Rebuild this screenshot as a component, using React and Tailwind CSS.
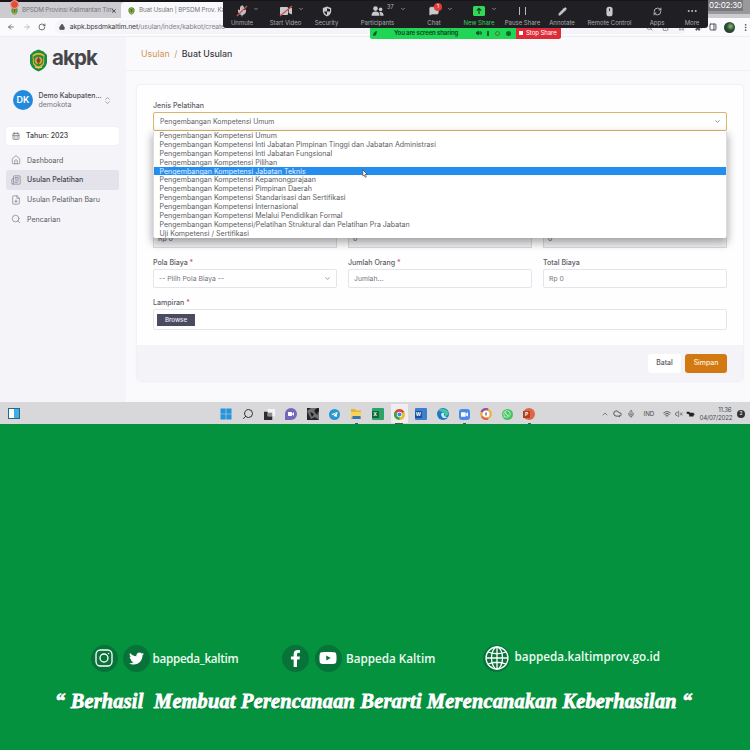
import React from "react";
import {
  ArrowLeft, ArrowRight, RotateCw, Lock, X, ChevronDown, ChevronUp, MicOff, Users, MessageSquare,
  Pencil, RefreshCw, Ellipsis, House, Newspaper, FilePlus, Search, CalendarDays, Cloud, Mic, Wifi, VolumeX,
  ChevronsUpDown, Star, Share, PanelRight, EllipsisVertical, Puzzle, Volume2,
} from "lucide-react";
import { FaTwitter, FaFacebookF, FaWhatsapp, FaTelegramPlane, FaYoutube, FaVideo } from "react-icons/fa";

const options = [
  "Pengembangan Kompetensi Umum",
  "Pengembangan Kompetensi Inti Jabatan Pimpinan Tinggi dan Jabatan Administrasi",
  "Pengembangan Kompetensi Inti Jabatan Fungsional",
  "Pengembangan Kompetensi Pilihan",
  "Pengembangan Kompetensi Jabatan Teknis",
  "Pengembangan Kompetensi Kepamongprajaan",
  "Pengembangan Kompetensi Pimpinan Daerah",
  "Pengembangan Kompetensi Standarisasi dan Sertifikasi",
  "Pengembangan Kompetensi Internasional",
  "Pengembangan Kompetensi Melalui Pendidikan Formal",
  "Pengembangan Kompetensi/Pelatihan Struktural dan Pelatihan Pra Jabatan",
  "Uji Kompetensi / Sertifikasi",
];

function Emblem({ className }) {
  return (
    <svg viewBox="0 0 18 23" className={className}>
      <path d="M9 0.5 L14 2.5 L17.5 6 V14 Q16 20 9 22.5 Q2 20 0.5 14 V6 L4 2.5Z" fill="#1b8a43" />
      <path d="M3 6 Q9 1.5 15 6 L14.5 15 Q12 19 9 20 Q6 19 3.5 15Z" fill="#d5b52b" />
      <path d="M4 7.5 Q9 4 14 7.5 L13.5 14 Q11 17 9 17.5 Q7 17 4.5 14Z" fill="#23864a" />
      <circle cx="9" cy="11.5" r="3.8" fill="#c9a83a" />
      <path d="M9 7.5 L11 11.5 L9 15.5 L7 11.5Z" fill="#8f3d32" />
      <path d="M5.5 18.3 H12.5" stroke="#e8d65e" strokeWidth="1" />
    </svg>
  );
}

function Tabs() {
  return (
    <div className="flex h-[18px] items-stretch border-t-2 border-[#17171a] bg-[#cbcbd0] text-[6.3px] text-[#77777c]">
      <div className="flex w-[121px] items-center pl-[11px] pt-[2px]">
        <div className="relative">
          <Emblem className="h-[8px] w-[7px]" />
          <div className="absolute -left-[1px] -top-[7px] size-[9px] rounded-full border border-[#f4a59b] bg-[#e14c3e]" />
        </div>
        <span className="ml-1 w-[87px] whitespace-nowrap tracking-[-0.15px]">BPSDM Provinsi Kalimantan Tim</span>
        <X className="ml-[2px] size-[6px] text-[#333]" strokeWidth={3} />
      </div>
      <div className="flex w-[120px] items-center rounded-t-[4px] bg-[#f9f9fc] pl-[7px] pt-[2px]">
        <Emblem className="h-[8px] w-[7px]" />
        <span className="ml-1 whitespace-nowrap tracking-[-0.15px]">Buat Usulan | BPSDM Prov. Kal</span>
      </div>
    </div>
  );
}

function AddressBar() {
  return (
    <div className="flex h-[19px] items-center border-b border-[#ececf1] bg-[#fbfbfe] pl-[7px] text-[#55555a]">
      <ArrowLeft className="size-[8px]" strokeWidth={2.5} />
      <ArrowRight className="ml-2 size-[8px] text-[#b5b5ba]" strokeWidth={2.5} />
      <RotateCw className="ml-[7px] size-[8px]" strokeWidth={2.5} />
      <div className="ml-[9px] flex h-[14px] w-[640px] items-center rounded-full bg-[#f5f5f9] pl-[4px]">
        <Lock className="size-[6px] fill-[#55555a]" strokeWidth={3} />
        <span className="ml-[5px] whitespace-nowrap pt-[1px] text-[6.8px] tracking-[-0.12px] text-[#3d3d42]">
          akpk.bpsdmkaltim.net<span className="text-[#85858a]">/usulan/index/kabkot/create</span>
        </span>
        <div className="ml-auto flex items-center gap-[9px] pr-[2px]">
          <Search className="size-[7px]" /><Share className="size-[7px]" /><Star className="size-[7px]" />
        </div>
      </div>
      <Puzzle className="ml-[8px] size-[8px] fill-[#55555a]" />
      <PanelRight className="ml-[6px] size-[8px]" strokeWidth={3} />
      <div className="ml-[7px] size-[11px] rounded-full bg-[radial-gradient(circle_at_60%_40%,#7ba36a_10%,#2f4f37_40%,#1b2f25)]" />
      <EllipsisVertical className="ml-[6px] size-[9px]" strokeWidth={2.5} />
    </div>
  );
}

const Chev = ({ className }) => <ChevronDown className={"absolute top-[5px] size-[6px] text-[#a5a5a8] " + className} strokeWidth={3} />;

function MeetingItem({ className, label, children, green }) {
  return (
    <div className={"relative flex shrink-0 flex-col items-center pt-[4px] " + className}>
      <div className="flex h-[12px] items-center text-[#c9c9cc]">{children}</div>
      <span className={"mt-[1.5px] whitespace-nowrap text-[6px] leading-[8px] " + (green ? "text-[#37cf55]" : "text-[#aaaaae]")}>{label}</span>
    </div>
  );
}

function MeetingBar() {
  return (
    <div className="absolute left-[223px] top-[1px] flex h-[27px] w-[485px] rounded-b-[3px] bg-[#202024]">
      <MeetingItem className="w-[38px]" label="Unmute"><Mic className="size-[12px] fill-[#b9b9bc]" strokeWidth={2} /><svg viewBox="0 0 12 12" className="absolute left-[13px] top-[4px] size-[12px]"><path d="M1 11 L11 1" stroke="#cf4d50" strokeWidth="1.3" /></svg><Chev className="left-[30px]" /></MeetingItem>
      <MeetingItem className="w-[49px]" label="Start Video"><FaVideo className="size-[12px]" /><svg viewBox="0 0 14 12" className="absolute left-[18px] top-[4px] h-[12px] w-[14px]"><path d="M1 11 L13 1" stroke="#cf4d50" strokeWidth="1.3" /></svg><Chev className="left-[37px]" /></MeetingItem>
      <MeetingItem className="w-[33px]" label="Security">
        <svg viewBox="0 0 12 13" className="h-[11px] w-[10px]"><path d="M6 0.5 L11 2.3 V6.5 Q10.5 10.5 6 12.5 Q1.5 10.5 1 6.5 V2.3Z" fill="#c9c9cc" /><path d="M6 2.5 V6.5 H9.6 V3.7Z M6 6.5 H2.5 Q3 9 6 10.8Z" fill="#202024" /></svg>
      </MeetingItem>
      <MeetingItem className="w-[69px]" label="Participants">
        <svg viewBox="0 0 13 10" className="h-[10px] w-[13px]" fill="#c9c9cc"><circle cx="4.5" cy="2.6" r="2.3" /><path d="M0.5 9.8 Q0.5 5.6 4.5 5.6 Q8.5 5.6 8.5 9.8Z" /><circle cx="9.6" cy="3.4" r="1.8" /><path d="M9.3 9.8 Q9.3 7.2 8.2 6.1 Q12.6 5.4 12.6 9.8Z" /></svg>
        <span className="absolute left-[44px] top-[2px] text-[5.5px] leading-[8px]  text-[#b9b9bc]">37</span><Chev className="left-[57px]" />
      </MeetingItem>
      <MeetingItem className="w-[44px]" label="Chat"><MessageSquare className="size-[10px] fill-[#c9c9cc]" /><span className="absolute left-[22px] top-[2px] flex size-[8px] items-center justify-center rounded-full bg-[#e63a39] text-[5px] text-white">1</span><Chev className="left-[35px]" /></MeetingItem>
      <MeetingItem className="w-[46px]" label="New Share" green>
        <svg viewBox="0 0 12 10" className="h-[10px] w-[12px]"><rect width="12" height="10" rx="1.5" fill="#2fda56" /><path d="M6 8 V2.5 M3.8 4.6 L6 2.4 L8.2 4.6" fill="none" stroke="#173b22" strokeWidth="1.2" /></svg>
        <Chev className="left-[35px]" />
      </MeetingItem>
      <MeetingItem className="w-[41px]" label="Pause Share"><div className="h-[8px] w-[7px] border-x-[1.5px] border-[#b9b9bd]" /></MeetingItem>
      <MeetingItem className="w-[38px]" label="Annotate"><Pencil className="size-[9px] fill-[#c9c9cc]" /></MeetingItem>
      <MeetingItem className="w-[57px]" label="Remote Control">
        <svg viewBox="0 0 8 12" className="h-[11px] w-[7px]"><rect x="0.5" y="0.5" width="7" height="11" rx="3" fill="#c9c9cc" /><path d="M4 2.5 V5.5" stroke="#333" strokeWidth="1.2" /></svg>
      </MeetingItem>
      <MeetingItem className="w-[38px]" label="Apps"><RefreshCw className="size-[9px]" strokeWidth={2.3} /></MeetingItem>
      <MeetingItem className="w-[32px]" label="More"><Ellipsis className="size-[12px]" strokeWidth={2} /></MeetingItem>
    </div>
  );
}

function ShareStatus() {
  return (
    <div className="absolute left-[370px] top-[28px] flex h-[10.5px] text-[6.1px] leading-[10px]">
      <div className="flex w-[146px] items-center rounded-bl-[2px] bg-[#1fd655] text-[#123c20]">
        <svg viewBox="0 0 6 6" className="ml-[3px] size-[5px]"><path d="M0 6 Q0 1 5 0 L3.5 5Z" fill="#0c5c25" /></svg>
        <span className="ml-[16px] whitespace-nowrap font-semibold tracking-[-0.15px]">You are screen sharing</span>
        <Volume2 className="ml-auto size-[6px] fill-[#14642c]" strokeWidth={3} />
        <span className="ml-[5px] h-[5px] w-[2px] bg-[#14642c]" />
        <span className="ml-[6px] size-[5px] rounded-full border border-[#55702a]" />
        <span className="ml-[6px] mr-[5px] size-[5px] rounded-full bg-[#0b6a2b]" />
      </div>
      <div className="flex w-[45px] items-center rounded-br-[2px] bg-[#dd2c38] pl-[3px] text-white">
        <span className="size-[4px] bg-white" />
        <span className="ml-[3px] whitespace-nowrap tracking-[-0.1px]">Stop Share</span>
      </div>
    </div>
  );
}

function NavItem({ icon: Icon, label, active }) {
  return (
    <div className={"flex h-[19.7px] items-center rounded-[3px] pl-[4.5px] text-[7.05px] " + (active ? "bg-[#e4e3ec] font-medium text-[#45454d]" : "text-[#5b5b63]")}>
      <Icon className="size-[10px] text-[#85858f]" strokeWidth={1.8} />
      <span className="ml-[6.5px] whitespace-nowrap pt-px">{label}</span>
    </div>
  );
}

function Sidebar() {
  return (
    <aside className="w-[126px] shrink-0 bg-[#f4f4f9] pl-[6px] pr-[7px]">
      <div className="flex h-[46px] items-center pl-[23px]">
        <Emblem className="h-[23px] w-[19px]" />
        <span className="-mt-[4px] ml-[4px] text-[20.5px] font-bold leading-[24px] tracking-[-0.9px] text-[#46464b]">akpk</span>
      </div>
      <div className="mt-[6px] flex h-[22px] items-center pl-[7px]">
        <div className="flex size-[20px] items-center justify-center rounded-full bg-[#2389dc] text-[9px] font-semibold text-white">DK</div>
        <div className="ml-[5.5px] w-[63px] whitespace-nowrap leading-[9.5px]">
          <div className="text-[6.9px] font-medium text-[#4a4a52]">Demo Kabupaten...</div>
          <div className="text-[7px] text-[#77777f]">demokota</div>
        </div>
        <ChevronsUpDown className="ml-[1px] size-[9px] text-[#8b8b93]" />
      </div>
      <div className="mt-[16px] flex h-[18px] items-center rounded-[3px] bg-white pl-[6px] shadow-[0_0_1px_#d5d5dd]">
        <CalendarDays className="size-[8px] text-[#85858f]" strokeWidth={2.8} />
        <span className="ml-[6px] text-[7px] font-medium text-[#3f3f47]">Tahun: 2023</span>
      </div>
      <nav className="mt-[5.5px]">
        <NavItem icon={House} label="Dashboard" />
        <NavItem icon={Newspaper} label="Usulan Pelatihan" active />
        <NavItem icon={FilePlus} label="Usulan Pelatihan Baru" />
        <NavItem icon={Search} label="Pencarian" />
      </nav>
    </aside>
  );
}

function FieldLabel({ children, required }) {
  return (
    <div className="h-[14px] pt-px text-[7.05px] font-medium leading-[14px] text-[#5d5d65]">
      {children}
      {required && <span className="text-[#d0506a]"> *</span>}
    </div>
  );
}

function Field({ label, value, required, select }) {
  return (
    <div className="w-[184px]">
      <FieldLabel required={required}>{label}</FieldLabel>
      <div className="flex h-[19px] items-center justify-between rounded-[2px] border border-[#e4e4ea] bg-white px-[5px] text-[6.85px] text-[#75757d]">
        <span className="whitespace-nowrap pt-px">{value}</span>
        {select && <ChevronDown className="size-[7px]" strokeWidth={2.5} />}
      </div>
    </div>
  );
}

function Main() {
  return (
    <main className="flex-1 bg-[#fafafd]">
      <div className="flex h-[34px] items-center border-b border-[#efeff4] pl-[15px] pt-px text-[8.8px] text-[#3a3a42]">
        <span className="text-[#d0944e]">Usulan</span>
        <span className="mx-[4.5px] text-[#c79a68]">/</span>
        <span className="font-medium">Buat Usulan</span>
      </div>
      <section className="ml-[11px] mt-[14px] h-[296px] w-[606px] rounded-[4px] bg-[#fefefe] shadow-[0_0_2px_#d9d9e2]">
        <div className="h-[260px] px-[16px] pt-[13px]">
          <FieldLabel>Jenis Pelatihan</FieldLabel>
          <div className="relative">
            <div className="flex h-[19px] items-center justify-between rounded-[2px] border border-[#dcb568] bg-white pl-[6px] pr-[5px] text-[6.88px] text-[#606068]">
              <span className="pt-px">Pengembangan Kompetensi Umum</span>
              <ChevronDown className="size-[7px]" strokeWidth={2.5} />
            </div>
            <div className="absolute left-0 top-[19px] z-10 h-[107px] w-[574px] rounded-b-[2px] border-x border-[#dedee2] bg-white shadow-[0_4px_9px_1px_rgba(0,0,0,0.32)]">
              {options.map((o, i) => (
                <div key={o} className={"h-[8.88px] whitespace-nowrap pl-[5.5px] text-[7.07px] leading-[9.6px] " + (i === 4 ? "bg-[#248ef0] text-[#e8f3ff]" : "text-[#5d5d62]")}>{o}</div>
              ))}
            </div>
          </div>
          <div className="mt-[98px] grid grid-cols-3 gap-[11px] text-[6.9px] leading-[18px] text-[#606068]">
            {["Rp 0", "0", "0"].map((v, i) => (
              <div key={i} className="h-[19px] border border-[#d8d8dd] bg-[#f2f2f5] pl-[4px]">{v}</div>
            ))}
          </div>
          <div className="mt-[7px] grid grid-cols-3 gap-[11px]">
            <Field label="Pola Biaya" value="-- Pilih Pola Biaya --" required select />
            <Field label="Jumlah Orang" value="Jumlah..." required />
            <Field label="Total Biaya" value="Rp 0" />
          </div>
          <div className="mt-[7px]"><FieldLabel required>Lampiran</FieldLabel></div>
          <div className="flex h-[21px] items-center rounded-[2px] border border-[#e4e4ea] bg-white pl-[3px]">
            <div className="flex h-[12px] w-[38px] items-center justify-center bg-[#4a4a60] pt-px text-[6.2px] font-medium text-[#eeeef4]">Browse</div>
          </div>
        </div>
        <div className="flex h-[36px] items-center justify-end gap-[4px] rounded-b-[4px] bg-[#f3f3f8] pr-[16px] text-[6.9px] font-medium">
          <div className="flex h-[19px] w-[33px] items-center justify-center rounded-[3px] bg-white pt-px text-[#55555d]">Batal</div>
          <div className="flex h-[19px] w-[42px] items-center justify-center rounded-[3px] bg-[#d37912] pt-px text-[#fff2df]">Simpan</div>
        </div>
      </section>
    </main>
  );
}

function Office({ letter, dark, light, round }) {
  return (
    <div className={"flex size-[12px] items-center " + light + (round ? " rounded-full" : " rounded-[1px]")}>
      <span className={"flex size-[7px] items-center justify-center text-[5px] font-bold leading-none text-white " + dark}>{letter}</span>
    </div>
  );
}

function Slot({ children, open, active }) {
  return (
    <div className={"relative flex h-[21px] w-[21.64px] shrink-0 items-center justify-center pt-px " + (active ? "before:absolute before:inset-x-[2px] before:inset-y-[1px] before:bg-[#eeeef0]" : "")}>
      <div className="relative">{children}</div>
      {open && <span className={"absolute bottom-0 h-[1.5px] bg-[#555] " + (active ? "w-[8px]" : "w-[3px]")} />}
    </div>
  );
}

function Taskbar() {
  return (
    <div className="flex h-[22px] items-center bg-[#d8d8da] pt-px text-[#4c4c50]">
      <div className="flex w-[215.5px] pl-[8px]">
        <div className="flex h-[11px] w-[12px] border border-[#24688f] bg-[#3faee0]"><div className="w-[5px] bg-white" /></div>
      </div>
      <Slot><svg viewBox="0 0 12 12" className="size-[12px]" fill="#2494dc"><path d="M0.5 0.5 H5.7 V5.7 H0.5Z M6.3 0.5 H11.5 V5.7 H6.3Z M0.5 6.3 H5.7 V11.5 H0.5Z M6.3 6.3 H11.5 V11.5 H6.3Z" /></svg></Slot>
      <Slot><Search className="size-[12px] -scale-x-100 text-[#333]" /></Slot>
      <Slot><svg viewBox="0 0 12 12" className="size-[11px]"><rect x="4" y="0" width="8" height="8" fill="#f4f4f4" /><path d="M0 3 H4 V8 H9 V12 H0Z" fill="#2e2c2e" /><rect x="4" y="4" width="5" height="4" fill="#8c8c8e" /></svg></Slot>
      <Slot><div className="flex size-[12px] items-center justify-center rounded-full rounded-bl-[3px] bg-[#7468bd]"><FaVideo className="size-[6px] text-white" /></div></Slot>
      <Slot><svg viewBox="0 0 12 12" className="size-[12px]"><rect width="12" height="12" fill="#252527" /><path d="M0 3 L4 0 H10 L7 3 L10 7 L12 3 V12 L8 9 L4 11 L2 7Z" fill="#707074" /><path d="M3 4 L7 6 L5 9Z M8 1 L11 2 L10 5Z" fill="#171719" /></svg></Slot>
      <Slot><div className="flex size-[11px] items-center justify-center rounded-full bg-[#2897cf]"><FaTelegramPlane className="size-[7px] text-white" /></div></Slot>
      <Slot open><svg viewBox="0 0 12 12" className="size-[12px]"><path d="M1 1 H5 L6 2.5 H11 V11 H1Z" fill="#e6b431" /><rect x="1" y="4" width="10" height="5" fill="#f7d35b" /><path d="M2.5 8 H10.5 V11 H2.5Z" fill="#3475b6" /></svg></Slot>
      <Slot><Office letter="X" dark="bg-[#12643a]" light="bg-[#2ba369]" /></Slot>
      <Slot open active>
        <svg viewBox="0 0 12 12" className="size-[11px]"><circle cx="6" cy="6" r="6" fill="#e6bd2e" /><path d="M6 6 L0.8 3 A6 6 0 0 1 11.2 3Z" fill="#d9493b" /><path d="M6 6 L0.8 3 A6 6 0 0 0 6 12Z" fill="#33a354" /><circle cx="6" cy="6" r="2.9" fill="#fff" /><circle cx="6" cy="6" r="2.2" fill="#4285e0" /></svg>
      </Slot>
      <Slot><Office letter="W" dark="bg-[#1c4f9c]" light="bg-[#3b80cf]" /></Slot>
      <Slot><svg viewBox="0 0 12 12" className="size-[12px]"><circle cx="6" cy="6" r="6" fill="#1b78c6" /><path d="M1 3 Q6 -2 11.6 4 Q12 8 7.5 8 Q9 4 1 3Z" fill="#45c4a0" /><path d="M4 7 Q4 4 7 5 Q6 9 11 9 Q8 11 5.5 9.5Z" fill="#d4e8f4" /></svg></Slot>
      <Slot open><div className="flex size-[11px] items-center justify-center rounded-[3px] bg-[#4b8bea]"><FaVideo className="size-[7px] text-white" /></div></Slot>
      <Slot><svg viewBox="0 0 12 12" className="size-[12px]"><circle cx="6" cy="6" r="4.7" fill="#fff" stroke="#efad38" strokeWidth="2.2" /><path d="M1.5 4 A4.8 4.8 0 0 1 8 1.5" fill="none" stroke="#8c55ae" strokeWidth="2.2" /><path d="M2 8.5 A4.8 4.8 0 0 0 8 10.4" fill="none" stroke="#e76449" strokeWidth="2.2" /><path d="M6 4.5 V7.5" stroke="#6b5a87" strokeWidth="1.4" /></svg></Slot>
      <Slot><div className="flex size-[11px] items-center justify-center rounded-full bg-[#43c463]"><FaWhatsapp className="size-[8px] text-white" /></div></Slot>
      <Slot open><Office letter="P" dark="bg-[#b43d21]" light="bg-[#df6748]" round /></Slot>
      <div className="ml-auto flex h-full items-center pr-[5px]">
        <ChevronUp className="size-[8px]" />
        <Cloud className="ml-[4px] size-[9px]" strokeWidth={2.5} />
        <Mic className="ml-[5px] size-[8px]" />
        <span className="ml-[9px] w-[12px] pt-px text-[6.2px]">IND</span>
        <Wifi className="ml-[7px] size-[8px]" strokeWidth={2.5} />
        <VolumeX className="ml-[4px] size-[8px]" />
        <svg viewBox="0 0 9 7" className="ml-[3px] h-[6px] w-[9px]"><path d="M0 1 H3 L4 2 H8 V3 H9 V5 H8 V6.5 H3 V4 L0 3Z" fill="#222" /></svg>
        <div className="ml-[5px] w-[32px] text-right text-[6.2px] leading-[8px] tracking-[-0.2px]"><div>11.36</div><div>04/07/2022</div></div>
        <div className="ml-[5.5px] flex size-[8px] items-center justify-center rounded-full bg-[#333336] text-[5px] text-white">2</div>
      </div>
    </div>
  );
}

function Badge({ children, className = "" }) {
  return <div className={"flex size-[27px] shrink-0 items-center justify-center rounded-full bg-[#077338] text-white " + className}>{children}</div>;
}

function Banner() {
  return (
    <footer className="h-[326px] overflow-hidden bg-[#04923f] pt-[220px] text-white">
      <div className="flex h-[28px] items-center pl-[90.5px] font-['Open_Sans',sans-serif] text-[11.7px] font-semibold text-[#eefaf0]">
        <Badge>
          <svg viewBox="0 0 18 18" className="size-[18px]" fill="none" stroke="currentColor"><rect x="1" y="1" width="16" height="16" rx="4.5" strokeWidth="1.3" /><circle cx="9" cy="9" r="4" strokeWidth="1.3" /><circle cx="13.6" cy="4.5" r="0.8" fill="currentColor" stroke="none" /></svg>
        </Badge>
        <Badge className="ml-[5px]"><FaTwitter className="size-[15px]" /></Badge>
        <span className="ml-[3px] w-[129px] whitespace-nowrap pt-px tracking-[-0.3px]">bappeda_kaltim</span>
        <Badge><FaFacebookF className="size-[17px]" /></Badge>
        <Badge className="ml-[6px]"><FaYoutube className="size-[18px]" /></Badge>
        <span className="ml-[4.5px] w-[137px] whitespace-nowrap pt-px">Bappeda Kaltim</span>
        <Badge>
          <svg viewBox="0 0 24 24" className="size-[24px]" fill="none" stroke="currentColor" strokeWidth="1.3"><circle cx="12" cy="12" r="11" /><ellipse cx="12" cy="12" rx="5.5" ry="11" /><path d="M12 1 V23 M1 12 H23 M3 6 Q12 9.5 21 6 M3 18 Q12 14.5 21 18" /></svg>
        </Badge>
        <span className="-mt-[2px] ml-[4.5px] whitespace-nowrap tracking-[0.04px]">bappeda.kaltimprov.go.id</span>
      </div>
      <div className="mt-[16px] flex h-[27px] items-center whitespace-pre pl-[55px] font-['Liberation_Serif',serif] text-[20.3px] font-bold italic tracking-[0.23px] [-webkit-text-stroke:0.8px_white] [text-shadow:0_1px_1px_#075d2b]">“ Berhasil  Membuat Perencanaan Berarti Merencanakan Keberhasilan “</div>
    </footer>
  );
}

export default function App() {
  return (
    <div className="h-[750px] w-[750px] overflow-hidden bg-[#04923f] font-[Inter,sans-serif]">
      <div className="relative h-[402px] overflow-hidden">
        <Tabs />
        <AddressBar />
        <div className="flex h-[365px]">
          <Sidebar />
          <Main />
        </div>
        <MeetingBar />
        <ShareStatus />
        <div className="absolute left-[708px] top-0 h-[14px] w-[42px] bg-[#98989d]"><div className="h-[11px] w-[35px] bg-[#77777c] text-center text-[8px] leading-[11px] tracking-[-0.2px] text-white">02:02:30</div></div>
        <svg viewBox="0 0 8 12" className="absolute left-[362px] top-[169px] z-20 h-[9px] w-[6px]"><path d="M1 1 L7 7 H4.5 L5.8 10.5 L4 11 L3 8 L1 9Z" fill="#fff" stroke="#333" strokeWidth="0.8" /></svg>
      </div>
      <Taskbar />
      <Banner />
    </div>
  );
}
